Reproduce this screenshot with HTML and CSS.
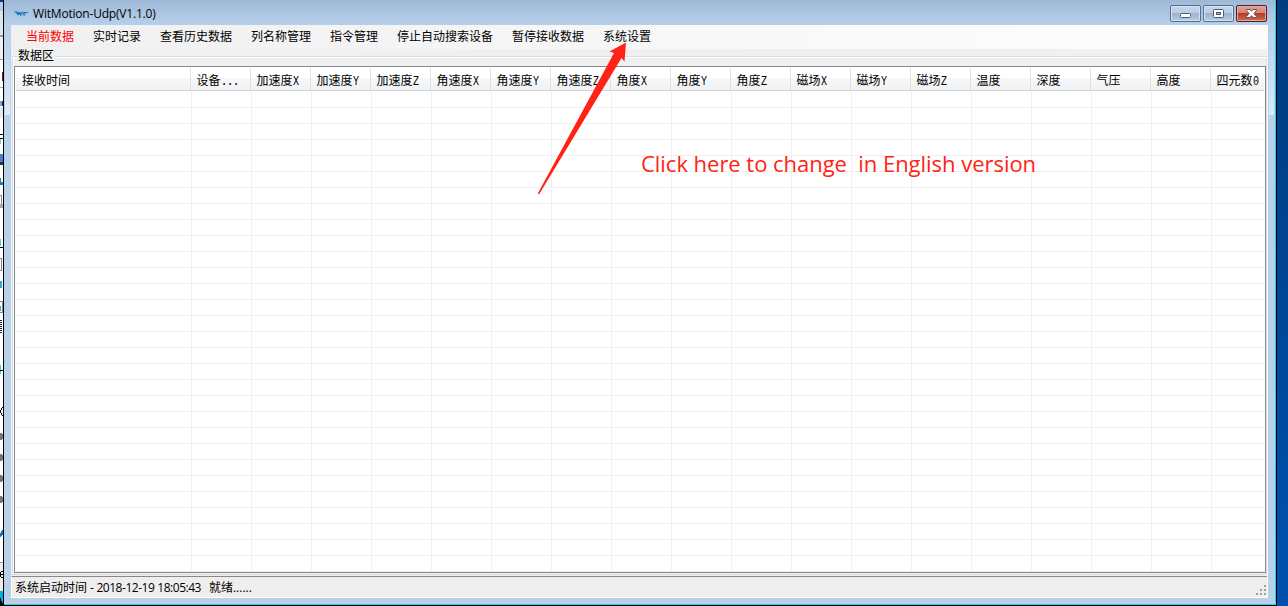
FILE: index.html
```html
<!DOCTYPE html>
<html lang="zh-CN">
<head>
<meta charset="utf-8">
<title>WitMotion-Udp(V1.1.0)</title>
<link rel="stylesheet" href="styles.css">
</head>
<body>
<div class="desktop">
  <svg class="behind" width="4" height="606" viewBox="0 0 4 606" shape-rendering="crispEdges">
    <rect width="4" height="606" fill="#fff"/>
    <rect width="4" height="2" fill="#003a94"/>
    <rect y="2" width="4" height="9" fill="#b4cce6"/>
    <rect y="11" width="4" height="24" fill="#dce6f1"/>
    <rect y="35" width="4" height="2" fill="#8f9ba8"/>
    <rect y="37" width="4" height="22" fill="#eceff3"/>
    <rect y="59" width="4" height="1" fill="#999"/>
    <rect x="2" y="72" width="2" height="9" fill="#70143c"/>
    <rect y="87" width="4" height="1" fill="#aaa"/>
    <rect y="101" width="2" height="5" fill="#58b4dc"/><rect x="2" y="101" width="2" height="5" fill="#70143c"/>
    <rect y="107" width="4" height="11" fill="#dcebf9"/>
    <rect y="134" width="4" height="1" fill="#000"/><rect y="138" width="4" height="1" fill="#000"/>
    <rect y="139" width="1" height="5" fill="#7cc7ee"/>
    <rect y="154" width="3" height="8" fill="#457fd3"/><rect y="162" width="3" height="3" fill="#333"/>
    <path d="M0 178h1v4h2v3H0z" fill="#217cba"/>
    <path d="M0 195.500h1.500v9" fill="none" stroke="#888"/><rect y="204" width="3" height="4" fill="#aaa"/>
    <rect y="239" width="1" height="7" fill="#65c3e7"/><rect y="247" width="4" height="1" fill="#000"/>
    <path d="M0 258.500h1.500v12H0" fill="none" stroke="#888"/>
    <rect y="281" width="2" height="7" fill="#36a7da"/>
    <path d="M0 301.500h2.500v11H0" fill="none" stroke="#888"/><rect y="306" width="1" height="5" fill="#36a7da"/>
    <path d="M1 320v14" fill="none" stroke="#124" stroke-width="2" stroke-dasharray="1 1"/>
    <rect y="365" width="1" height="9" fill="#45c8ed"/><rect y="370" width="4" height="1" fill="#000"/>
    <path d="M2 407h2v1H2zM1 408h1v2H1zM0 410h1v3H0zM1 413h1v2H1zM2 415h2v1H2z" fill="#000"/>
    <g fill="#777"><path d="M0 433h2v1h1v5H2v1H0zM0 454h2v1h1v5H2v1H0zM0 475h2v1h1v5H2v1H0zM0 496h2v1h1v5H2v1H0z"/></g>
    <path d="M0 538v-4l3-5v5z" fill="#1074c0"/>
    <rect y="562" width="4" height="1" fill="#999"/><rect y="563" width="4" height="28" fill="#f1ece5"/>
    <path d="M1 571h2v1H1zM0 572h1v5H0zM1 574h2v1H1zM1 577h2v1H1z" fill="#000"/>
    <rect y="591" width="4" height="15" fill="#00aeea"/><path d="M0 597l3 7v2H0z" fill="#000"/>
    <rect x="3" width="1" height="606" fill="#000"/>
  </svg>

  <div class="window">
    <header class="titlebar">
      <svg class="logo" width="14" height="8" viewBox="0 0 14 8" fill="none" stroke="#0f74bd" stroke-linecap="round"><path d="M.5 2h3M2.500 2.500L4 4.800M4.500 2.500L4 5l2-2.500L6.500 5l2-3" stroke-width="1.100"/><path d="M9.800 2.500L9 5.200M11.300 2.500l-.8 2.700M10.500 2.500h3" stroke-width="1"/></svg>
      <h1 class="title">WitMotion-Udp(V1.1.0)</h1>
      <div class="controls">
        <span class="control"><svg width="29" height="15" viewBox="0 0 29 15"><rect x="9.500" y="7.500" width="10" height="4" rx="1" fill="#fff" stroke="#505b6e"/></svg></span>
        <span class="control"><svg width="29" height="15" viewBox="0 0 29 15"><rect x="9.500" y="3.500" width="10" height="8" rx="1" fill="#fff" stroke="#505b6e"/><rect x="12.500" y="6.500" width="4" height="2" fill="#92add0" stroke="#505b6e"/></svg></span>
        <span class="control control-close"><svg width="29" height="15" viewBox="0 0 29 15"><path d="M9.500 3.500h3.500l1.500 1.800L16 3.500h3.500v1L17 7.500l2.500 3v1H16l-1.500-1.800-1.500 1.800H9.500v-1l2.500-3-2.500-3z" fill="#fff" stroke="#5a5361"/></svg></span>
      </div>
    </header>

    <main class="client">
      <nav class="menu">
        <a class="active">当前数据</a><a>实时记录</a><a>查看历史数据</a><a>列名称管理</a><a>指令管理</a><a>停止自动搜索设备</a><a>暂停接收数据</a><a>系统设置</a>
      </nav>
      <fieldset class="group">
        <legend>数据区</legend>
        <div class="list">
          <div class="list-head">
            <span>接收时间</span><span>设备<i class="dots">...</i></span><span>加速度<i>X</i></span><span>加速度<i>Y</i></span><span>加速度<i>Z</i></span><span>角速度<i>X</i></span><span>角速度<i>Y</i></span><span>角速度<i>Z</i></span><span>角度<i>X</i></span><span>角度<i>Y</i></span><span>角度<i>Z</i></span><span>磁场<i>X</i></span><span>磁场<i>Y</i></span><span>磁场<i>Z</i></span><span>温度</span><span>深度</span><span>气压</span><span>高度</span><span>四元数<i>0</i></span>
          </div>
          <div class="list-body"></div>
        </div>
      </fieldset>
      <footer class="status">
        <span>系统启动时间<span class="started"> - 2018-12-19 18:05:43</span></span><span>就绪......</span>
        <svg class="grip" width="10" height="10" viewBox="0 0 10 10" fill="#a09e9e"><path d="M8 0h2v2H8zM4 4h2v2H4zM8 4h2v2H8zM0 8h2v2H0zM4 8h2v2H4zM8 8h2v2H8z"/></svg>
      </footer>
    </main>
  </div>
  <div class="wallpaper"></div>

  <svg class="arrow" width="92" height="154" viewBox="0 0 92 154"><path d="M.8 151.500L77 11l-4.500-1.500L89 .5l-1.500 19-3-3.500L2 152.500z" fill="#ff2315"/></svg>
  <p class="callout">Click here to change&nbsp; in English version</p>
</div>
</body>
</html>
```
FILE: styles.css
```css
* { box-sizing: border-box; }

body {
  margin: 0;
  width: 1288px;
  height: 606px;
  overflow: hidden;
  font: 12px/16px "Noto Sans CJK SC", sans-serif;
  color: #000;
}

.desktop {
  position: relative;
  display: grid;
  grid-template-columns: 4px 1273px 11px;
  height: 606px;
}

.behind { display: block; }

.wallpaper { background: linear-gradient(#003c80, #003f86 20%, #0050ac 90%); }

.window {
  display: flex;
  flex-direction: column;
  height: 606px;
  padding: 0 8px 7px 7px;
  background: linear-gradient(#dce9f600 30px, #dce9f6 114px) 1px 0 / 5px 115px no-repeat,
    linear-gradient(#dce9f600 30px, #dce9f6 114px) 1265px 0 / 5px 115px no-repeat,
    linear-gradient(#9fb8d6, #b7d0ea 25px, #b9d0e9 60px, #b9d0e9);
  border-right: 1px solid #000;
  border-bottom: 1px solid #000;
  box-shadow: inset -1px -1px #29d0ed;
}

.titlebar {
  display: flex;
  align-items: center;
  height: 25px;
  padding: 0 1px 0 3px;
}

.logo { margin-top: 3px; }

.title {
  margin: 3px 0 0 5px;
  font: 12px/16px "Open Sans", sans-serif;
  letter-spacing: -0.2px;
}

.controls {
  display: flex;
  gap: 2px;
  margin: 2px 0 0 auto;
}

.control {
  width: 31px;
  height: 17px;
  border: 1px solid #566e90;
  border-radius: 2px;
  background: linear-gradient(#c4d5e8, #b8cde5 45%, #9bb5d2 50%, #b4cce6);
  box-shadow: inset 0 0 0 1px #d6e4f2;
}

.control svg { display: block; }

.control-close {
  border-color: #541c25;
  background: linear-gradient(#e2a297, #d48474 45%, #b93a21 50%, #cb6e50);
  box-shadow: inset 0 0 0 1px #e3a99d;
}

.client {
  display: flex;
  flex-direction: column;
  flex: 1;
  background: #f0f0f0;
  border-right: 1px solid #fafafa;
}

.menu {
  display: flex;
  gap: 19px;
  height: 24px;
  padding: 3px 15px;
  background: linear-gradient(90deg, #f0f0f0, #fcfcfc 85%);
}

.active { color: #f00; }

.group {
  height: 527px;
  margin: 0 0 0 1px;
  padding: 0;
  border: 0;
  display: flex;
  flex-direction: column;
  background: linear-gradient(#d5dfe5, #d5dfe5) 0 7px / 100% 1px no-repeat,
    linear-gradient(#fff, #fff) 0 8px / 100% 1px no-repeat,
    linear-gradient(#d5dfe5, #d5dfe5) 0 525px / 100% 1px no-repeat,
    linear-gradient(#d5dfe5, #d5dfe5) 0 8px / 1px 517px no-repeat,
    linear-gradient(#fff, #fff) 1px 8px / 1px 517px no-repeat,
    linear-gradient(#d5dfe5, #d5dfe5) 100% 8px / 1px 517px no-repeat;
}

legend {
  float: left;
  width: 38px;
  height: 17px;
  margin-left: 5px;
  padding: 0 0 0 1px;
  line-height: 12px;
  background: #f0f0f0;
}

.list {
  width: 1252px;
  height: 507px;
  margin-left: 2px;
  border: 1px solid #828790;
  padding: 1px;
  background: #fff;
}

.list-head {
  display: grid;
  grid-template-columns: 175px repeat(17, 60px) 53px;
  height: 23px;
  background: linear-gradient(#fff 45%, #f7f8fa 46%, #f1f2f4);
  border-bottom: 1px solid #d5d5d5;
}

.list-head span {
  padding: 4px 0 0 6px;
  border-right: 1px solid #e0e1e4;
  white-space: nowrap;
  overflow: hidden;
}

.list-head span + span { padding-left: 5.5px; }

.list-head span:last-child { border-right: 0; }

.list-head i {
  display: inline-block;
  font: 12px/12px "Liberation Mono", monospace;
  transform: scaleX(0.84);
  transform-origin: left;
}

.list-head .dots {
  transform: none;
  letter-spacing: -1.2px;
}

.list-body {
  height: 480px;
  margin-top: 1px;
  background: repeating-linear-gradient(transparent 0 15px, #f0f0f0 15px 16px),
    repeating-linear-gradient(90deg, #f0f0f0 0 1px, transparent 1px 60px) 175px 0 / 1080px 100% no-repeat;
}

.status {
  display: flex;
  gap: 8px;
  height: 22px;
  padding: 3px 1px 0 3px;
  background: #f0eded;
  border-top: 1px solid #85888d;
  border-left: 1px solid #fff;
  border-bottom: 1px solid #fff;
  font-family: "Open Sans", "Noto Sans CJK SC", sans-serif;
}

.started {
  letter-spacing: -0.48px;
  word-spacing: 0.4px;
}

.grip { margin: 5px 0 0 auto; }

.arrow {
  position: absolute;
  left: 537px;
  top: 42px;
}

.callout {
  position: absolute;
  left: 641px;
  top: 148px;
  margin: 0;
  font: 22px/30px "Open Sans", sans-serif;
  letter-spacing: -0.03px;
  color: #ff2315;
  white-space: nowrap;
}
```
